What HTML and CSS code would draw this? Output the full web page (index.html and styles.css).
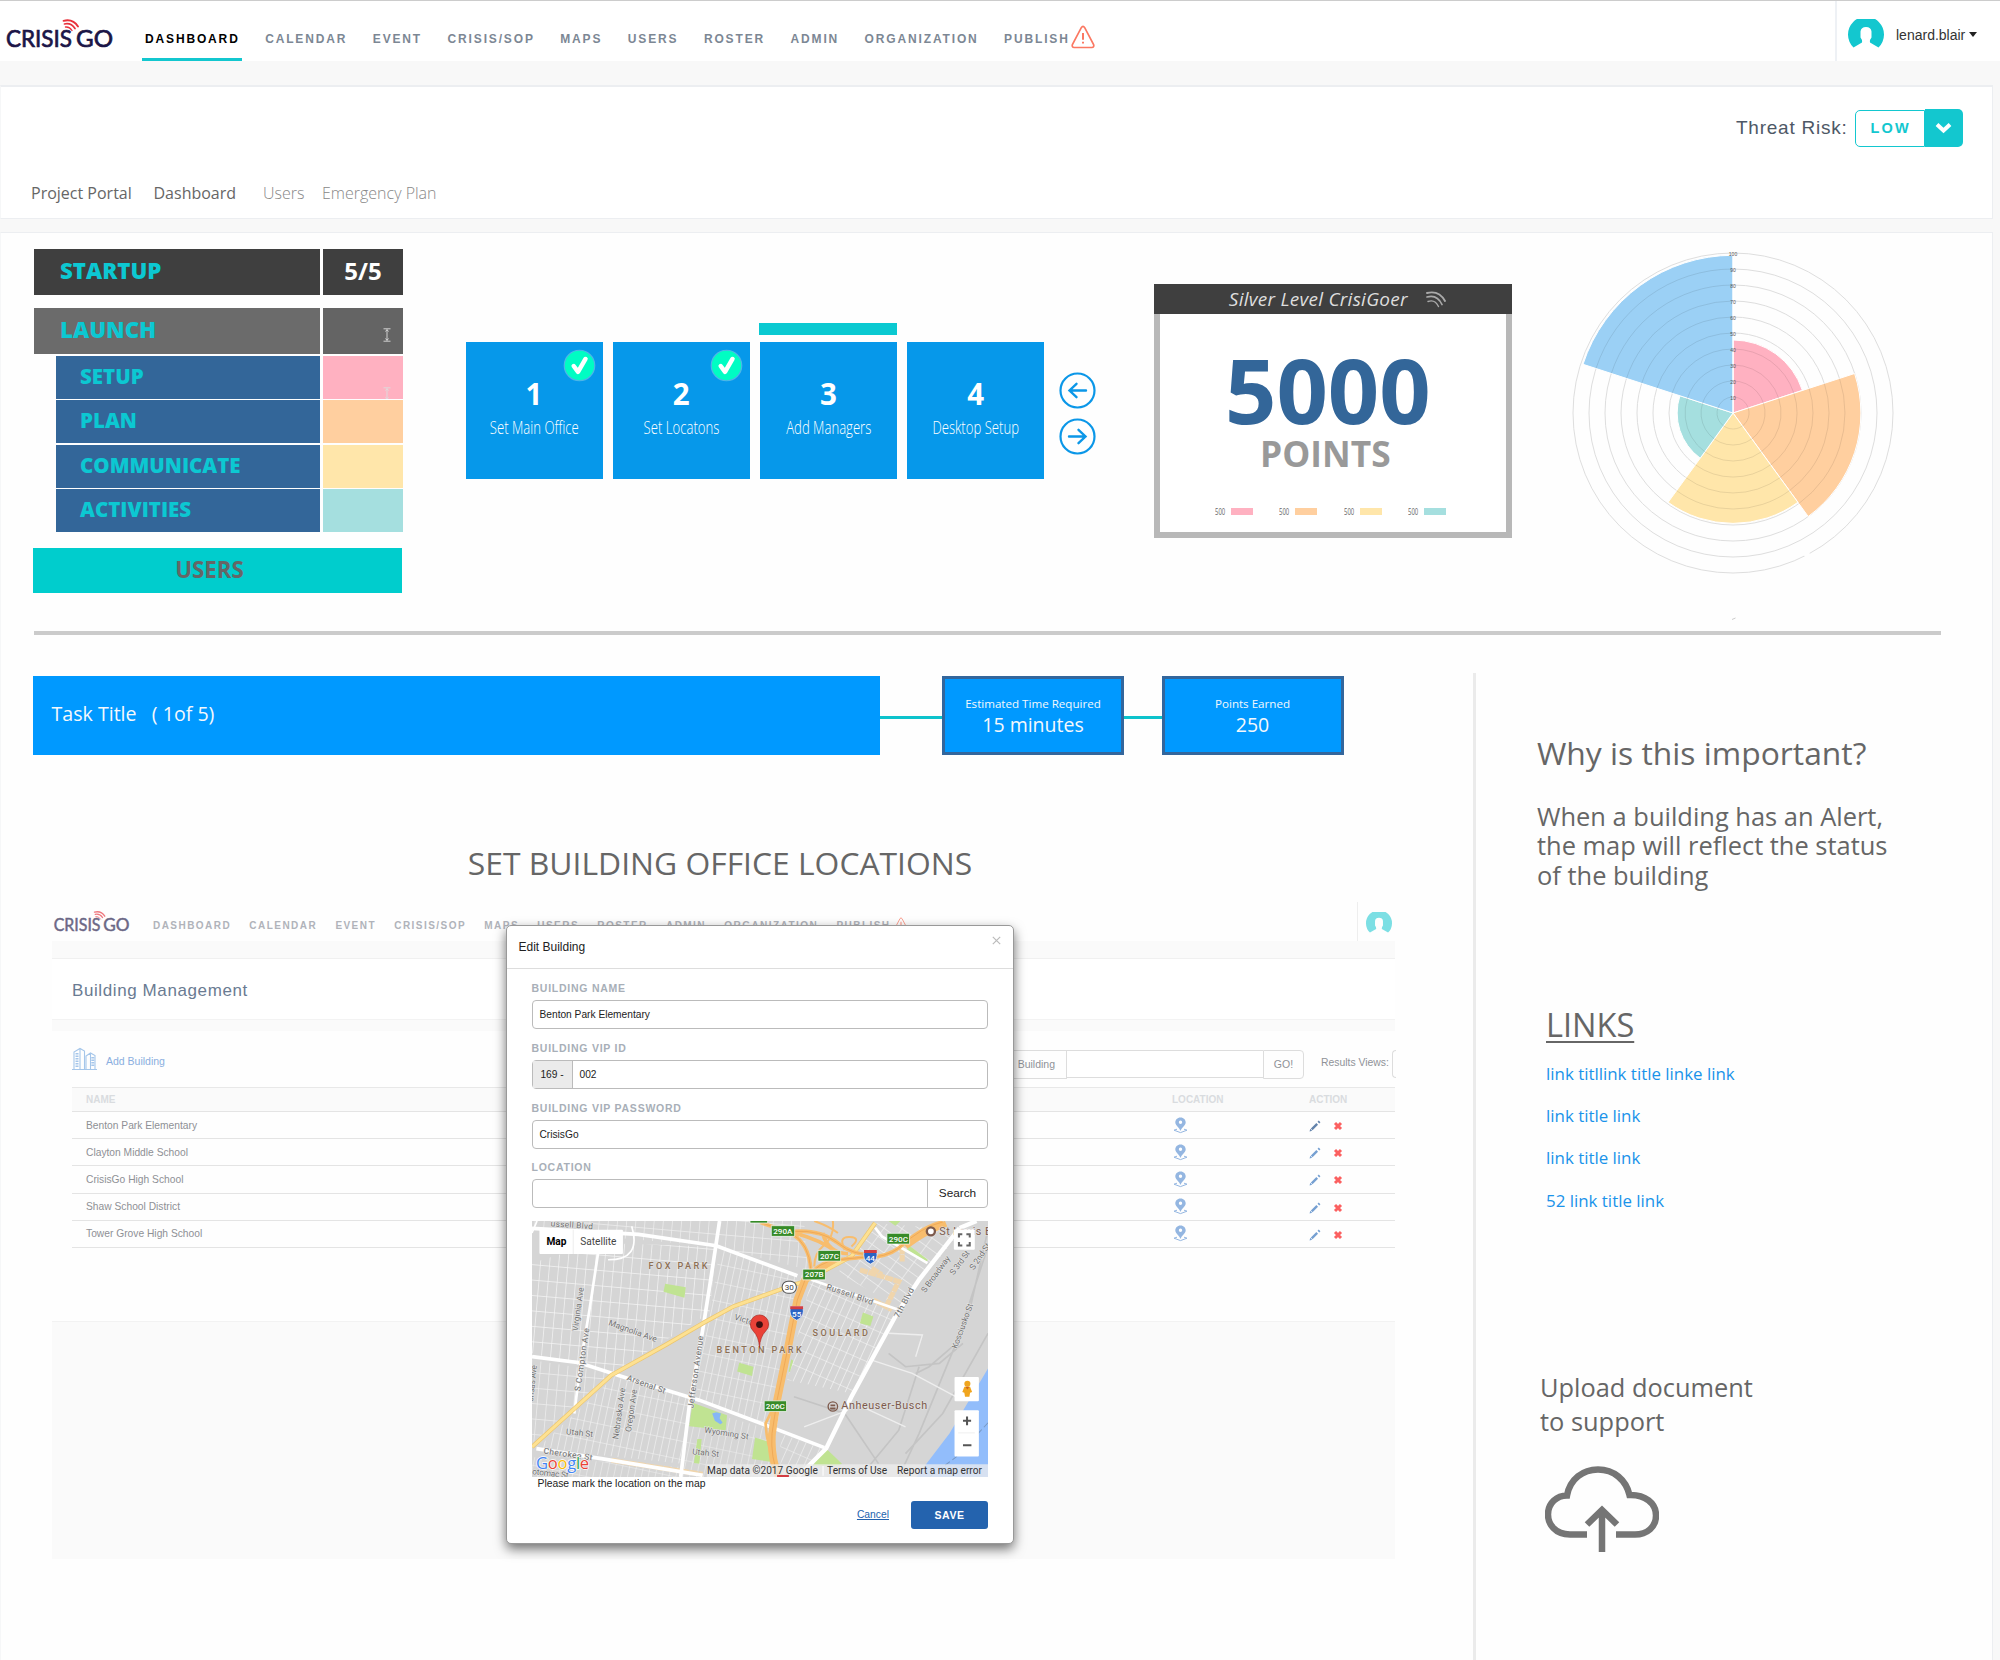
FILE: index.html
```html
<!DOCTYPE html>
<html lang="en">
<head>
<meta charset="utf-8">
<title>CrisisGo Dashboard</title>
<link rel="stylesheet" href="styles.css">
</head>
<body>
<svg class="defs" width="0" height="0" aria-hidden="true">
  <symbol id="logo" viewBox="0 0 110 32" overflow="visible">
    <g font-family="Lato, sans-serif" font-size="23" font-weight="400" fill="#1b1547" stroke="#1b1547" stroke-width=".7">
      <text x="1" y="29" textLength="66" lengthAdjust="spacingAndGlyphs">CRISIS</text>
      <text x="71" y="29" textLength="37" lengthAdjust="spacingAndGlyphs">GO</text>
    </g>
    <g fill="none" stroke="#e8323c" stroke-linecap="round">
      <path d="M58.500 2.800Q68 0.500 73 8.500" stroke-width="1.900"/>
      <path d="M59.500 6Q66 4.500 70 10.500" stroke-width="1.700"/>
      <path d="M60.500 9Q64.500 8.500 67 12.500" stroke-width="1.400"/>
    </g>
  </symbol>
  <symbol id="warn" viewBox="0 0 24 24">
    <path d="M10.300 2.700Q12 .2 13.700 2.700L22.600 19.500Q23.500 22.300 20.800 22.500H3.200Q.5 22.300 1.400 19.500Z" fill="none" stroke="#fb7862" stroke-width="1.700"/>
    <path d="M12 8v6.800M12 16.700v1.800" stroke="#fb7862" stroke-width="2" fill="none"/>
  </symbol>
  <symbol id="avatar" viewBox="0 0 36 29">
    <path d="M5.500 28.500A18 18 0 1 1 30.500 28.500L22 23.500Q21.500 21 23.500 18.500V12.500Q23 8 18 8T12.500 12.500V18.500Q14.500 21 14 23.500Z" fill="#13c7cf"/>
  </symbol>
  <symbol id="check" viewBox="0 0 34 34">
    <circle cx="17" cy="17" r="15.700" fill="#00fdc3" stroke="#4db5e8" stroke-width="1.200"/>
    <path d="M11 17.500L15.500 23.500 23.200 10.300" fill="none" stroke="#fff" stroke-width="4.600" stroke-linecap="round" stroke-linejoin="round"/>
  </symbol>
  <symbol id="pin" viewBox="0 0 15 17">
    <path d="M1 13.200L4 12.200M11 12.200L14 13.200 7.500 15.600 1 13.200" fill="none" stroke="#94b6e1" stroke-width="1"/>
    <path d="M7.500 .5C4.200.5 2.300 2.900 2.300 5.600 2.300 8.600 6.300 10.700 7.500 14 8.700 10.700 12.700 8.600 12.700 5.600 12.700 2.900 10.800.5 7.500.5ZM7.500 3.600a1.700 1.700 0 1 1 0 3.400 1.700 1.700 0 1 1 0-3.400Z" fill="#94b6e1" fill-rule="evenodd"/>
  </symbol>
  <symbol id="pencil" viewBox="0 0 12 12">
    <path d="M2.700 9.300L8.200 3.800M9.400 2.600L10.600 1.400" stroke="currentColor" stroke-width="2.400" fill="none"/>
    <path d="M.6 11.400L1.200 8.800 3.200 10.800Z" fill="currentColor"/>
  </symbol>
  <symbol id="cross" viewBox="0 0 10 10">
    <path d="M2 2L8 8M8 2L2 8" stroke="#fb6060" stroke-width="3" fill="none"/>
  </symbol>
  <symbol id="ibeam" viewBox="0 0 8 14">
    <path d="M.5 .8H7.500M.5 13.200H7.500M4 1.500V12.500M2.500 3.500L4 1.700 5.500 3.500M2.500 10.500L4 12.300 5.500 10.500" fill="none" stroke="#ddd" stroke-width=".9"/>
  </symbol>
</svg>

<header class="topbar">
  <svg class="topbar-logo"><use href="#logo"/></svg>
  <nav class="nav">
    <a class="active">DASHBOARD</a><a>CALENDAR</a><a>EVENT</a><a>CRISIS/SOP</a><a>MAPS</a><a>USERS</a><a>ROSTER</a><a>ADMIN</a><a>ORGANIZATION</a><a>PUBLISH</a>
  </nav>
  <svg class="topbar-warn"><use href="#warn"/></svg>
  <div class="user">
    <svg class="user-avatar"><use href="#avatar"/></svg>
    <span class="user-name">lenard.blair</span><span class="caret"></span>
  </div>
</header>

<section class="panel intro">
  <div class="threat">
    <span class="threat-label">Threat Risk:</span>
    <span class="threat-value">LOW</span>
    <span class="threat-drop"><svg width="17" height="12" viewBox="0 0 17 12"><path d="M2 2.500L8.500 8.500 15 2.500" fill="none" stroke="#fff" stroke-width="4"/></svg></span>
  </div>
  <div class="crumbs"><span class="c1">Project Portal</span><span class="c2">Dashboard</span><span class="c3 light">Users</span><span class="c4 light">Emergency Plan</span></div>
</section>

<main class="panel board">
  <section class="overview">
    <div class="stages">
      <div class="stage main dark"><b>STARTUP</b><i class="score">5/5</i></div>
      <div class="stage main grey"><b>LAUNCH</b><i><svg class="beam"><use href="#ibeam"/></svg></i></div>
      <div class="stage sub"><b>SETUP</b><i class="pink"><svg class="beam low"><use href="#ibeam"/></svg></i></div>
      <div class="stage sub"><b>PLAN</b><i class="orange"></i></div>
      <div class="stage sub"><b>COMMUNICATE</b><i class="yellow"></i></div>
      <div class="stage sub"><b>ACTIVITIES</b><i class="teal"></i></div>
      <div class="users-btn">USERS</div>
    </div>

    <div class="steps">
      <div class="step"><div class="marker"></div><div class="tile"><svg class="check"><use href="#check"/></svg><b>1</b><span class="cond">Set Main Office</span></div></div>
      <div class="step"><div class="marker"></div><div class="tile"><svg class="check"><use href="#check"/></svg><b>2</b><span class="cond">Set Locatons</span></div></div>
      <div class="step"><div class="marker on"></div><div class="tile"><b>3</b><span class="cond">Add Managers</span></div></div>
      <div class="step"><div class="marker"></div><div class="tile"><b>4</b><span class="cond">Desktop Setup</span></div></div>
    </div>

    <div class="arrows">
      <svg width="37" height="37" viewBox="0 0 37 37"><g fill="none" stroke="#0b97e8" stroke-width="2.200"><circle cx="18.500" cy="18.500" r="17"/><path d="M27 18.500H10.500M17.500 11.800L10.500 18.500 17.500 25.200" stroke-width="2.400" stroke-linecap="round"/></g></svg>
      <svg width="37" height="37" viewBox="0 0 37 37"><g fill="none" stroke="#0b97e8" stroke-width="2.200"><circle cx="18.500" cy="18.500" r="17"/><path d="M10 18.500H26.500M19.500 11.800L26.500 18.500 19.500 25.200" stroke-width="2.400" stroke-linecap="round"/></g></svg>
    </div>

    <div class="points">
      <div class="points-head"><span>Silver Level CrisiGoer</span>
        <svg width="20" height="17" viewBox="0 0 20 17"><g fill="none" stroke="#aaa" stroke-linecap="round"><path d="M1 2Q13-1 19 10" stroke-width="1.900"/><path d="M1 6Q11 3 16 13.500" stroke-width="1.700"/><path d="M2 10.500Q9 8 12.500 15.500" stroke-width="1.400"/></g></svg></div>
      <div class="points-body">
        <div class="points-num">5000</div>
        <div class="points-unit">POINTS</div>
        <div class="legend"><span>500</span><i class="pink"></i><span>500</span><i class="orange"></i><span>500</span><i class="yellow"></i><span>500</span><i class="teal"></i></div>
      </div>
    </div>

    <svg class="chart" width="324" height="372" viewBox="-162 -162 324 372">
      <g fill="none" stroke="#dedede" stroke-width="1">
        <circle r="16"/><circle r="32"/><circle r="48"/><circle r="64"/><circle r="80"/><circle r="96"/><circle r="112"/><circle r="128"/><circle r="144"/><circle r="160"/>
      </g>
      <path d="M72 144L77 141" stroke="#fefefe" stroke-width="5"/>
      <g stroke="#fff" stroke-width="1">
        <path d="M0 0V-73A73 73 0 0 1 69.400-22.600Z" fill="#ffb1c1"/>
        <path d="M0 0L121.600-39.500A127.900 127.900 0 0 1 75.200 103.500Z" fill="#ffcf9f"/>
        <path d="M0 0L64.900 89.300A110.400 110.400 0 0 1-64.900 89.300Z" fill="#ffe6aa"/>
        <path d="M0 0L-32.800 45.200A55.800 55.800 0 0 1-53.100-17.300Z" fill="#a5dfdf"/>
        <path d="M0 0L-150-48.700A157.700 157.700 0 0 1 0-157.700Z" fill="#9bd0f5"/>
      </g>
      <g fill="none" stroke="#000" stroke-opacity=".09" stroke-width="1">
        <path d="M0-16A16 16 0 1 1-15.200-4.900A16 16 0 0 1 0-16"/>
        <path d="M0-32A32 32 0 1 1-30.400-9.900A32 32 0 0 1 0-32"/>
        <path d="M0-48A48 48 0 1 1-45.600-14.800A48 48 0 0 1 0-48"/>
        <path d="M-60.900-19.800A64 64 0 0 1 0-64A64 64 0 0 1 60.900-19.800A64 64 0 0 1-37.600 51.800"/>
        <path d="M-76.100-24.700A80 80 0 0 1 0-80M76.100-24.700A80 80 0 0 1-47 64.700"/>
        <path d="M-91.300-29.700A96 96 0 0 1 0-96M91.300-29.700A96 96 0 0 1-56.400 77.700"/>
        <path d="M-106.500-34.600A112 112 0 0 1 0-112M106.500-34.600A112 112 0 0 1 65.800 90.600"/>
        <path d="M-121.700-39.500A128 128 0 0 1 0-128M-137-44.500A144 144 0 0 1 0-144"/>
      </g>
      <path d="M0 0V-158" stroke="#fff" stroke-width="1"/>
      <g class="ticks"><text y="-157.500">100</text><text y="-141.500">90</text><text y="-125.500">80</text><text y="-109.500">70</text><text y="-93.500">60</text><text y="-77.500">50</text><text y="-61.500">40</text><text y="-45.500">30</text><text y="-29.500">20</text><text y="-13.500">10</text></g>
      <path d="M-1 206.500L2.500 205" stroke="#ccc" stroke-width="1"/>
    </svg>
  </section>

  <div class="rule"></div>

  <div class="lower">
    <div class="work">
      <div class="task">
        <div class="task-title">Task Title &nbsp; ( 1of 5)</div>
        <div class="link-line l1"></div>
        <div class="fact"><small>Estimated Time Required</small><span>15 minutes</span></div>
        <div class="link-line l2"></div>
        <div class="fact"><small>Points Earned</small><span>250</span></div>
      </div>
      <h1>SET BUILDING OFFICE LOCATIONS</h1>

      <div class="embed">
        <div class="e-top">
          <svg class="e-logo"><use href="#logo"/></svg>
          <nav class="nav e-nav"><a>DASHBOARD</a><a>CALENDAR</a><a>EVENT</a><a>CRISIS/SOP</a><a>MAPS</a><a>USERS</a><a>ROSTER</a><a>ADMIN</a><a>ORGANIZATION</a><a>PUBLISH</a></nav>
          <svg class="e-warn"><use href="#warn"/></svg>
          <div class="e-user"><svg class="e-avatar"><use href="#avatar"/></svg></div>
        </div>
        <div class="e-title">Building Management</div>
        <div class="e-main">
          <div class="e-tools">
            <svg class="e-build" width="25" height="24" viewBox="0 0 25 24"><g fill="none" stroke="#a5c6ea" stroke-width="1.100"><path d="M0 22.500H25M2 22V5L8 1.500 12.500 4V22M8 1.500V22M14 22V9L18.500 6 23 8.500V22M18.500 6V22"/><path d="M5 6V20M20.800 10V20" stroke-width="3" stroke-dasharray="1.500 1"/></g></svg>
            <span class="e-add">Add Building</span>
            <span class="e-kind">Building</span><span class="e-query"></span><span class="e-go">GO!</span>
            <span class="e-results">Results Views:</span><span class="e-select"></span>
          </div>
          <div class="e-table">
            <div class="e-row e-head"><span>NAME</span><span>LOCATION</span><span>ACTION</span></div>
            <div class="e-row"><span>Benton Park Elementary</span><svg class="pin"><use href="#pin"/></svg><svg class="pencil first"><use href="#pencil"/></svg><svg class="cross"><use href="#cross"/></svg></div>
            <div class="e-row"><span>Clayton Middle School</span><svg class="pin"><use href="#pin"/></svg><svg class="pencil"><use href="#pencil"/></svg><svg class="cross"><use href="#cross"/></svg></div>
            <div class="e-row"><span>CrisisGo High School</span><svg class="pin"><use href="#pin"/></svg><svg class="pencil"><use href="#pencil"/></svg><svg class="cross"><use href="#cross"/></svg></div>
            <div class="e-row"><span>Shaw School District</span><svg class="pin"><use href="#pin"/></svg><svg class="pencil"><use href="#pencil"/></svg><svg class="cross"><use href="#cross"/></svg></div>
            <div class="e-row"><span>Tower Grove High School</span><svg class="pin"><use href="#pin"/></svg><svg class="pencil"><use href="#pencil"/></svg><svg class="cross"><use href="#cross"/></svg></div>
          </div>
        </div>

        <div class="modal">
          <div class="m-head"><span>Edit Building</span><svg width="9" height="9" viewBox="0 0 9 9"><path d="M.8 .8L8.200 8.200M8.200 .8L.8 8.200" stroke="#bbb" stroke-width="1.200"/></svg></div>
          <div class="m-body">
            <label>BUILDING NAME</label>
            <div class="field"><span>Benton Park Elementary</span></div>
            <label>BUILDING VIP ID</label>
            <div class="field"><em>169 -</em><span>002</span></div>
            <label>BUILDING VIP PASSWORD</label>
            <div class="field"><span>CrisisGo</span></div>
            <label>LOCATION</label>
            <div class="field"><span></span><strong>Search</strong></div>
            <svg class="map" width="456" height="256" viewBox="95 64 1349 766" preserveAspectRatio="none">
              <defs>
                <pattern id="gw" width="27" height="46" patternUnits="userSpaceOnUse" patternTransform="rotate(5)"><path d="M0 0V46M0 0H27" stroke="#fff" stroke-width="4" fill="none"/></pattern>
                <pattern id="gc" width="20" height="54" patternUnits="userSpaceOnUse" patternTransform="rotate(12)"><path d="M0 0V54M0 0H20" stroke="#fff" stroke-width="3.500" fill="none"/></pattern>
                <pattern id="ge" width="22" height="48" patternUnits="userSpaceOnUse" patternTransform="rotate(24)"><path d="M0 0V48M0 0H22" stroke="#fff" stroke-width="3.500" fill="none"/></pattern>
                <pattern id="gn" width="44" height="30" patternUnits="userSpaceOnUse" patternTransform="rotate(36)"><path d="M0 0V30M0 0H44" stroke="#fff" stroke-width="4" fill="none"/></pattern>
              </defs>
              <rect x="95" y="64" width="1349" height="766" fill="#d5d5d5"/>
              <path d="M95 190L290 130 640 140 620 340 330 520 95 460Z" fill="url(#gw)" opacity=".75"/>
              <path d="M95 480L340 520 230 620 95 730ZM95 64H900L910 210 640 140 290 110 95 80Z" fill="url(#gw)" opacity=".6"/>
              <path d="M650 150L910 230 860 430 820 680 570 590 620 350ZM340 530L560 590 540 790 110 745Z" fill="url(#gc)" opacity=".75"/>
              <path d="M560 620L810 690 800 830H540ZM95 770L540 800V830H95Z" fill="url(#gc)" opacity=".6"/>
              <path d="M920 240L1180 330 1040 580 850 540Z" fill="url(#ge)" opacity=".85"/>
              <path d="M1100 70L1370 90 1180 320 1000 220Z" fill="url(#gn)" opacity=".65"/>
              <path d="M830 700L960 745 890 830H830Z" fill="url(#ge)" opacity=".7"/>
              <path d="M1444 90L1390 330 1240 700 1180 830M1444 140L1350 430 1270 500 1230 520M1444 400L1310 640 1200 760M1150 460L1200 500 1300 490 1370 430M870 590L1020 640 1120 790M1090 800L1180 690 1240 500" stroke="#c4c4c4" stroke-width="5" fill="none"/>
              <path d="M1444 505V830H1232L1330 700Z" fill="#92bdfb"/>
              <path d="M1444 668L1350 770 1270 830" stroke="#7899c4" stroke-width="3" stroke-dasharray="18 9" fill="none"/>
              <path d="M1100 480L1220 520 1350 590M1050 610L1200 680M900 680L1030 630M1150 400L1250 405 1230 470" stroke="#eee" stroke-width="4" fill="none"/>
              <g fill="#c0e392"><path d="M489 252L550 262 546 294 484 276Z"/><path d="M708 488L750 500 746 528 702 514Z"/><path d="M1074 338L1105 350 1096 378 1065 370Z"/><path d="M570 608L672 645 668 690 560 678Z"/><path d="M755 712L800 726 808 786 746 776Z"/><path d="M965 745L1012 790 1000 796H925Z"/><path d="M1212 138L1266 180 1260 190 1205 150Z"/><path d="M862 478L868 482 858 516 854 514ZM584 716H597L590 790 574 788ZM1150 64H1185L1170 78Z"/></g>
              <path d="M628 640L636 662 652 672 659 668 650 654 654 640 640 636Z" fill="#86b6f6"/>
              <path d="M1065 210L1180 245 1140 325M1105 300L1160 330M1100 205L1130 225M1190 140L1190 185M330 780L600 822" stroke="#f0d5ac" stroke-width="15" stroke-dasharray="24 2" fill="none"/>
              <g fill="none" stroke="#fff" stroke-width="11">
                <path d="M95 470L235 488 370 532 590 600 800 680 960 742"/>
                <path d="M95 86L410 104 640 138 880 228"/>
                <path d="M650 64L622 250 600 390 560 620 535 830"/>
                <path d="M292 150L265 330 240 480 220 640" stroke-width="8"/>
                <path d="M108 745L300 775 600 825"/>
                <path d="M1360 85L1240 240 1175 340 1040 590 965 745 880 830" stroke-width="13"/>
                <path d="M1360 85L1410 64" stroke-width="13"/>
                <path d="M900 232L1175 328M1110 84L1130 110 1265 190" stroke-width="8"/>
                <path d="M390 80Q420 180 320 180M95 100L110 64" stroke-width="5"/>
              </g>
              <g fill="none" stroke-linejoin="round">
                <path d="M95 740L330 525 490 435 600 370 690 320 840 265 900 245 1040 170 1110 70" stroke="#ecc66f" stroke-width="13"/>
                <path d="M95 740L330 525 490 435 600 370 690 320 840 265 900 245 1040 170 1110 70" stroke="#fde192" stroke-width="9"/>
              </g>
              <g fill="none" stroke="#f8bd6d">
                <path d="M985 64Q990 110 960 135T930 200M930 64Q975 80 1000 100M1020 150Q1000 110 1035 112T1040 140" stroke-width="6"/>
                <path d="M770 68L860 100Q915 130 920 210M870 95Q950 90 1000 130T1100 162M870 100Q950 120 1000 160M955 100Q970 160 1030 162M1310 67Q1250 80 1180 145 1140 175 1080 172L1000 180Q940 185 905 240" stroke-width="11"/>
                <path d="M1320 72Q1250 100 1200 140M990 180L920 225" stroke-width="18"/>
                <path d="M905 235L880 300 855 430 820 600 805 700Q800 770 825 830" stroke-width="23"/>
                <path d="M820 600L786 670Q790 740 815 790" stroke-width="8"/>
              </g>
              <g fill="none" stroke="#eaa04e" stroke-width="2"><path d="M905 235L880 300 855 430 820 600 805 700Q800 770 825 830M770 68L860 100Q915 130 920 210M870 95Q950 90 1000 130T1100 162M1310 67Q1250 80 1180 145 1140 175 1080 172L1000 180Q940 185 905 240"/></g>
              <g class="street">
                <text x="150" y="80" transform="rotate(4 150 80)" textLength="125">ussell Blvd</text>
                <text transform="translate(230 395) rotate(-82)" textLength="132">Virginia Ave</text>
                <text transform="translate(238 574) rotate(-82)" textLength="190">S Compton Ave</text>
                <text transform="translate(98 605) rotate(-84)" textLength="110">ansas Ave</text>
                <text transform="translate(320 375) rotate(20)" textLength="150">Magnolia Ave</text>
                <text transform="translate(374 540) rotate(20)" textLength="120">Arsenal St</text>
                <text transform="translate(350 718) rotate(-82)" textLength="155">Nebraska Ave</text>
                <text transform="translate(388 696) rotate(-82)" textLength="128">Oregon Ave</text>
                <text transform="translate(572 625) rotate(-82)" textLength="218">Jefferson Avenue</text>
                <text transform="translate(692 358) rotate(18)" textLength="66">Victor</text>
                <text transform="translate(964 268) rotate(19)" textLength="145">Russell Blvd</text>
                <text transform="translate(195 702) rotate(6)" textLength="80">Utah St</text>
                <text transform="translate(128 760) rotate(8)" textLength="146">Cherokee St</text>
                <text transform="translate(95 822) rotate(6)" textLength="108">otomac St</text>
                <text transform="translate(604 697) rotate(9)" textLength="132">Wyoming St</text>
                <text transform="translate(568 762) rotate(6)" textLength="80">Utah St</text>
                <text transform="translate(1180 356) rotate(-62)" textLength="98">7th Blvd</text>
                <text transform="translate(1258 280) rotate(-54)" textLength="128">S Broadway</text>
                <text transform="translate(1343 227) rotate(-54)" textLength="82">S 3rd St</text>
                <text transform="translate(1402 212) rotate(-56)" textLength="90">S 2nd St</text>
                <text transform="translate(1352 448) rotate(-70)" textLength="142">Kosciusko St</text>
              </g>
              <g class="area">
                <text x="440" y="209" textLength="174">FOX PARK</text>
                <text x="641" y="458" textLength="252">BENTON PARK</text>
                <text x="925" y="408" textLength="164">SOULARD</text>
              </g>
              <g class="place">
                <text x="1010" y="628" textLength="254">Anheuser-Busch</text>
                <text x="1300" y="106" textLength="155">St Louis B</text>
              </g>
              <circle cx="985" cy="619" r="14" fill="none" stroke="#7d5a4c" stroke-width="4"/><path d="M978 613H992V618H978ZM977 622H993V628H977Z" fill="#7d5a4c"/>
              <circle cx="1275" cy="95" r="12" fill="#fff" stroke="#7d5a4c" stroke-width="7"/>
              <g fill="#378b28" stroke="#fff" stroke-width="2"><path d="M803 78H872V110H803ZM1145 101H1212V133H1145ZM941 152H1008V184H941ZM896 208H963V240H896ZM782 602H848V634H782ZM740 60H792V70H740Z"/></g>
              <g class="exit"><text x="837" y="104">290A</text><text x="1179" y="126">290C</text><text x="975" y="177">207C</text><text x="930" y="233">207B</text><text x="815" y="627">206C</text></g>
              <path d="M1078 152H1114Q1122 182 1096 193 1070 182 1078 152ZM860 320H896Q904 350 878 361 852 350 860 320Z" fill="#2a63c4" stroke="#fff" stroke-width="2"/><path d="M1077 151H1115V160H1077ZM859 319H897V328H859Z" fill="#d33e43"/>
              <g class="exit"><text x="1096" y="184">44</text><text x="878" y="352">55</text></g>
              <rect x="835" y="244" width="42" height="36" rx="17" fill="#fff" stroke="#555" stroke-width="3"/><text class="route" x="856" y="271">30</text>
              <path d="M768 442Q766 410 750 394 740 384 741 372A27 27 0 0 1 795 372Q796 384 786 394 770 410 768 442Z" fill="#ea4238" stroke="#a9271f" stroke-width="2"/><circle cx="768" cy="374" r="10" fill="#401010"/>
              <g fill="#fff"><rect x="117" y="90" width="247" height="73" rx="3"/><rect x="1343" y="89" width="62" height="61" rx="3"/><rect x="1345" y="531" width="72" height="72" rx="3"/><rect x="1345" y="630" width="72" height="139" rx="3"/></g>
              <path d="M217 90V163M1356 698H1405" stroke="#e5e5e5" stroke-width="2"/>
              <path d="M1358 113V104H1368M1380 104H1390V113M1390 127V137H1380M1368 137H1358V127" fill="none" stroke="#666" stroke-width="6"/>
              <path d="M1370 662H1394M1382 649V675M1370 735H1395" stroke="#555" stroke-width="6"/>
              <path d="M1374 560H1391L1397 576 1391 578 1389 590H1376L1374 578 1368 576Z" fill="#f0a51e"/><circle cx="1383" cy="551" r="9" fill="#f0a51e"/><path d="M1377 560L1383 568 1389 560Z" fill="#d0641a"/>
              <g class="ctl"><text x="138" y="136" font-weight="700" textLength="59" fill="#000">Map</text><text x="238" y="136" textLength="107" fill="#444">Satellite</text></g>
              <path d="M612 792H1444V830H612Z" fill="#eee" opacity=".75"/><path d="M956 797V826" stroke="#fff" stroke-width="3"/><path d="M820 824H855V830H820Z" fill="#d33e43"/>
              <g class="ctl" fill="#333"><text x="613" y="821" textLength="328">Map data ©2017 Google</text><text x="968" y="821" textLength="178">Terms of Use</text><text x="1175" y="821" textLength="251">Report a map error</text></g>
              <text class="google" x="107" y="807" textLength="157"><tspan fill="#4285f4">G</tspan><tspan fill="#ea4335">o</tspan><tspan fill="#fbbc05">o</tspan><tspan fill="#4285f4">g</tspan><tspan fill="#34a853">l</tspan><tspan fill="#ea4335">e</tspan></text>
            </svg>
            <p>Please mark the location on the map</p>
            <div class="m-actions"><a>Cancel</a><button>SAVE</button></div>
          </div>
        </div>
      </div>
    </div>

    <aside class="side">
      <h2>Why is this important?</h2>
      <p class="why">When a building has an Alert,<br>the map will reflect the status<br>of the building</p>
      <h3>LINKS</h3>
      <ul><li>link titllink title linke link</li><li>link title link</li><li>link title link</li><li>52 link title link</li></ul>
      <p class="upload">Upload document<br>to support</p>
      <svg class="cloud" width="114" height="87" viewBox="0 0 114 87"><path d="M42 68.500H25C10 68.500 3 58 3 48.500 3 37 12 29.500 22 29.500 25 13 38 3.500 53 3.500 69 3.500 81 14 84.500 29 100 28.500 111 37 111 49.500 111 61 102 68.500 90 68.500H71" fill="none" stroke="#757575" stroke-width="6.500"/><path d="M57 86V48M42 58.500L57 44 72 58.500" fill="none" stroke="#757575" stroke-width="6.500"/></svg>
    </aside>
  </div>
</main>
</body>
</html>
```
FILE: styles.css
```css
* { box-sizing: border-box; }
body {
  margin: 0;
  width: 2000px;
  height: 1660px;
  overflow: hidden;
  background: #f8f8f8;
  font-family: "Open Sans", sans-serif;
  color: #666;
}
svg { display: block; flex: none; }
.defs { position: absolute; }
b, i, em, strong { font-style: normal; }

/* Top bar */
.topbar {
  display: flex;
  height: 61px;
  border-top: 1px solid #ccc;
  background: #fff;
}
.topbar-logo { width: 110px; height: 32px; margin: 17px 0 0 5px; overflow: visible; }
.nav {
  display: flex;
  gap: 25.500px;
  margin-left: 30px;
  font: 700 12px/60px "Liberation Sans", sans-serif;
  letter-spacing: 1.85px;
  color: #7c8794;
  white-space: nowrap;
}
.topbar .nav a { height: 60px; padding-top: 1px; line-height: 75px; }
.topbar .nav .active { color: #000; box-shadow: inset 0 -3px #13c7cf; margin: 0 -2px 0 -3px; padding-left: 3px; padding-right: 2px; }
.topbar-warn { width: 24px; height: 24px; margin: 24px 0 0 1px; }
.user {
  display: flex;
  align-items: center;
  width: 165px;
  margin-left: auto;
  padding-left: 11px;
  border-left: 2px solid #eef1f5;
}
.user-avatar { width: 36px; height: 29px; margin-top: 4px; }
.user-name { margin: 8px 0 0 12px; font: 14px "Liberation Sans", sans-serif; color: #333; }
.caret { margin: 7px 0 0 4px; border: 4.500px solid transparent; border-top: 5px solid #222; border-bottom: 0; }

/* Intro panel */
.panel { width: 1993px; background: #fff; border: 1px solid #eceef1; border-left-color: #f6f7f8; }
.intro { height: 134px; margin-top: 24px; border-top-width: 2px; }
.threat { display: flex; align-items: center; height: 38px; margin-top: 22px; padding-left: 1735px; }
.threat-label { width: 119px; font: 19px "Liberation Sans", sans-serif; letter-spacing: .75px; color: #4e5866; white-space: nowrap; }
.threat-value {
  width: 69.500px;
  height: 37px;
  border: 1px solid #13c7cf;
  border-radius: 5px 0 0 5px;
  font: 700 14.500px/35px "Liberation Sans", sans-serif;
  letter-spacing: 2.200px;
  text-align: center;
  text-indent: 2px;
  color: #13c7cf;
}
.threat-drop { display: flex; align-items: center; justify-content: center; width: 38px; height: 38px; border-radius: 0 5px 5px 0; background: #13c7cf; }
.crumbs { display: flex; margin-top: 34px; padding-left: 30px; font-size: 16px; line-height: 24px; color: #666; white-space: nowrap; }
.c1 { width: 122.500px; }
.c2 { width: 109.500px; }
.c3 { width: 59px; }
.light { font-weight: 300; color: #888; }

/* Board */
.board { height: 1440px; margin-top: 13px; background: #fefefe; }
.overview { display: flex; align-items: flex-start; height: 398px; padding-left: 33px; }
.stages { width: 369px; margin-top: 16px; }
.stage { display: flex; gap: 3px; font-weight: 700; }
.stage b { flex: 1; color: #0cc8d2; }
.stage i { width: 80px; }
.main { height: 46px; margin-bottom: 13px; font-size: 22.300px; line-height: 44px; }
.main b { padding-left: 26px; }
.dark b, .dark i { background: #3f3f3f; }
.grey { margin-bottom: 2px; }
.grey b { background: #6b6b6b; }
.grey i { background: #646464; }
.stage .score { color: #fff; font-size: 24px; text-align: center; }
.sub { height: 42.600px; margin: 0 0 1.900px 22px; font-size: 20.500px; line-height: 41px; }
.sub b { padding-left: 24px; background: #336699; }
.beam { width: 8px; height: 14px; margin: 20px 0 0 60px; }
.stage i.pink { overflow: hidden; }
.beam.low { margin-top: 31px; }
.pink { background: #ffb1c1; }
.orange { background: #ffcf9f; }
.yellow { background: #ffe6aa; }
.teal { background: #a5dfdf; }
.users-btn { width: 369px; height: 45px; margin: 16px 0 0 -1px; padding-right: 16px; background: #00cdcd; color: #666; font-size: 22.300px; font-weight: 700; line-height: 44px; text-align: center; }

.steps { display: flex; gap: 10.200px; margin: 90px 0 0 62.500px; }
.marker { width: 138px; height: 12px; margin: 0 0 7px -1px; }
.marker.on { background: #0ac9d1; }
.step { width: 137px; }
.tile { position: relative; display: flex; flex-direction: column; align-items: center; width: 137px; height: 137px; padding-top: 32px; background: #0698ea; color: #fff; }
.tile b { font-size: 29.500px; line-height: 40px; }
.cond { margin-top: -1px; font-size: 17.500px; font-weight: 300; line-height: 28px; white-space: nowrap; transform: scaleX(.75); }
.check { position: absolute; top: 7px; right: 7px; width: 33px; height: 33px; }
.arrows { display: grid; gap: 9.500px; margin: 138.500px 0 0 14.800px; }

.points { width: 358px; margin: 51px 0 0 58px; }
.points-head { display: flex; align-items: center; height: 30px; padding: 0 66px 0 75px; background: #3f3f3f; color: #ddd; font-size: 19px; letter-spacing: .25px; line-height: 28px; font-style: italic; justify-content: space-between; white-space: nowrap; }
.points-body { height: 224px; padding-top: 33px; border: 6.500px solid #b8b8b8; border-top: 0; text-align: center; font-weight: 700; background: #fff; }
.points-num { padding-right: 10px; color: #336699; font-size: 90px; line-height: 84px; }
.points-unit { padding-right: 15px; color: #999; font-size: 35.300px; line-height: 44px; }
.legend { display: flex; align-items: center; height: 14px; margin: 29px 0 0 55px; }
.legend span { width: 16px; font-size: 8.500px; font-weight: 400; text-align: left; transform: scaleX(.7); transform-origin: left; }
.legend i { width: 22px; height: 7px; margin-right: 26.500px; }

.chart { margin: 18px 0 0 59.300px; }
.ticks { font: 5px "Liberation Sans", sans-serif; fill: #555; text-anchor: middle; }
.rule { width: 1907px; height: 4px; margin-left: 33px; background: #cbcbcb; }

/* Lower area */
.lower { display: flex; }
.work { width: 1472px; padding: 41px 0 0 32px; }
.task { display: flex; align-items: center; height: 79px; color: #f4f8fc; }
.task-title { width: 847px; height: 79px; padding-left: 18.500px; background: #0099ff; font-size: 19.600px; line-height: 76px; }
.link-line { height: 3px; margin-top: 4px; background: #0cc3cc; }
.l1 { width: 62px; }
.l2 { width: 37.500px; }
.fact { display: flex; flex-direction: column; width: 182px; height: 79px; padding-top: 16px; border: 3px solid #33669c; background: #0099ff; font-size: 19.500px; line-height: 24px; text-align: center; }
.fact small { font-size: 11.600px; line-height: 18px; }
h1 { width: 1374px; margin: 86px 0 0; color: #666; font-size: 31.850px; font-weight: 400; line-height: 44px; text-align: center; }

/* Embedded building screen */
.embed { position: relative; width: 1343px; height: 657px; margin: 17px 0 0 19px; background: #fafafa; font-family: "Liberation Sans", sans-serif; }
.e-top { display: flex; height: 39px; background: #fefefe; }
.e-logo { width: 78px; height: 23px; margin: 8px 0 0 1px; opacity: .65; overflow: visible; }
.e-nav { gap: 18.300px; margin-left: 22px; font-size: 10px; line-height: 48px; letter-spacing: 1.450px; color: #b0b3ba; }
.e-warn { width: 14px; height: 16px; margin: 14px 0 0 3px; opacity: .7; }
.e-user { height: 39px; margin: 0 3px 0 auto; padding: 10px 0 0 8px; border-left: 1px solid #eee; }
.e-avatar { width: 26px; height: 21px; opacity: .55; }
.e-title { height: 62px; margin-top: 17px; padding-left: 20px; border-top: 1px solid #f0f0f0; border-bottom: 1px solid #f3f3f3; background: #fff; color: #6a7b92; font-size: 17px; line-height: 63px; letter-spacing: .6px; }
.e-main { height: 291px; margin-top: 11px; background: #fefefe; border-bottom: 1px solid #f2f2f2; }
.e-tools { display: flex; height: 56px; padding: 16px 0 0 20px; color: #8f9298; font-size: 10.500px; }
.e-tools span { flex: none; }
.e-add { width: 857px; margin-left: 9px; color: #8aaee0; font-size: 10.500px; line-height: 28px; }
.e-kind, .e-query, .e-go { height: 29px; margin-top: 3px; border: 1px solid #ddd; line-height: 27px; }
.e-kind { width: 104px; padding-right: 11px; text-align: right; }
.e-query { width: 196px; height: 28px; border-width: 1px 0; background: #fff; }
.e-go { width: 41px; border-radius: 0 4px 4px 0; text-align: center; }
.e-results { width: 71px; margin-left: 17px; font-size: 10.400px; line-height: 32px; white-space: nowrap; }
.e-tools .e-select { width: 4px; height: 28px; margin-top: 3px; border: 1px solid #ddd; border-right: 0; border-radius: 4px 0 0 4px; }
.e-table { margin-left: 20px; border-top: 1px solid #e8e8e8; }
.e-row { display: flex; align-items: center; height: 27.200px; padding-left: 14px; border-bottom: 1px solid #e4e4e4; color: #8e9095; font-size: 10.250px; }
.e-row span { flex: none; width: 1087px; }
.e-head { height: 24px; background: #fafafa; color: #d9dcdf; font-size: 10px; font-weight: 700; }
.e-head span + span { width: 137px; }
.e-head span:first-child { width: 1086px; }
.pin { width: 15px; height: 17px; }
.pencil { width: 12px; height: 12px; margin: 2px 0 0 121px; color: #76a0d2; }
.pencil.first { color: #6484ac; }
.cross { width: 10px; height: 10px; margin: 2px 0 0 12px; }

/* Edit dialog */
.modal { position: absolute; left: 453.500px; top: 23px; width: 508.500px; height: 619px; border: 1px solid #999; border-radius: 5px; background: #fff; box-shadow: 0 5px 12px rgba(0, 0, 0, .55); color: #222; }
.m-head { display: flex; justify-content: space-between; height: 43px; padding: 0 12px 0 12px; border-bottom: 1px solid #ddd; font-size: 12px; line-height: 42px; }
.m-head svg { margin-top: 10px; }
.m-body { padding: 9px 25px 0; }
label { display: block; height: 22px; font-size: 10.500px; font-weight: 700; line-height: 20px; letter-spacing: .75px; color: #a8afb8; }
.field { display: flex; height: 29px; margin-bottom: 8.800px; border: 1px solid #bbb; border-radius: 4px; font-size: 10.200px; line-height: 27px; }
.field span { flex: 1; padding-left: 7px; }
.field em { width: 40px; border-right: 1px solid #bbb; background: #ebebeb; text-align: center; }
.field strong { width: 60px; border-left: 1px solid #bbb; font-size: 11.800px; font-weight: 400; text-align: center; }
.map { margin-top: 12.500px; }
.map text { font-family: Roboto, sans-serif; }
.street { font-size: 25px; fill: #707070; stroke: #e8e8e8; stroke-width: 3px; paint-order: stroke; }
.area { font-size: 27px; font-weight: 500; fill: #8d6f54; stroke: #e2e2e2; stroke-width: 3px; paint-order: stroke; }
.place { font-size: 32px; fill: #7d5a4c; stroke: #e2e2e2; stroke-width: 3px; paint-order: stroke; }
.exit { font-size: 24px; font-weight: 500; fill: #fff; text-anchor: middle; }
.route { font-size: 24px; fill: #444; text-anchor: middle; }
.ctl { font-size: 30px; }
.map .google { font: 500 49px "Open Sans", sans-serif; stroke: #fff; stroke-width: 4px; paint-order: stroke; }
.m-body p { margin: 0 0 0 6px; font-size: 10.350px; line-height: 14px; }
.m-actions { display: flex; align-items: center; justify-content: flex-end; gap: 22px; margin-top: 10px; }
.m-actions a { color: #2463ae; font-size: 10.300px; text-decoration: underline; }
.m-actions button { width: 77px; height: 28px; padding: 0; border: 0; border-radius: 3px; background: #2463ae; color: #fff; font: 700 10.500px "Liberation Sans", sans-serif; letter-spacing: .5px; }

/* Side column */
.side { width: 450px; height: 1000px; margin-top: 38px; padding: 57px 0 0 61px; border-left: 3px solid #ebebeb; white-space: nowrap; }
h2 { margin: 0; font-size: 31.800px; font-weight: 400; line-height: 46px; }
.why { margin: 26px 0 0; font-size: 25.450px; line-height: 29.300px; }
h3 { width: max-content; margin: 115px 0 0 9px; font-size: 32.500px; font-weight: 500; line-height: 40px; text-decoration: underline; text-decoration-thickness: 2px; text-underline-offset: 4px; }
ul { margin: 8px 0 0 9px; padding: 0; list-style: none; color: #1a93ea; font-size: 16.900px; line-height: 42.300px; }
.upload { margin: 148px 0 0 3px; font-size: 25.400px; line-height: 34px; }
.cloud { margin: 28px 0 0 8px; }
```
